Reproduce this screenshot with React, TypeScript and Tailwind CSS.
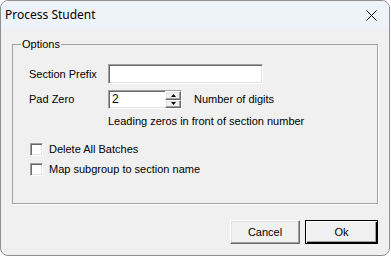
import React from "react";

// ── sunken field (classic 3D edge) ──────────────────────────────
const sunken =
  "bg-white border border-t-[#a0a0a0] border-l-[#a0a0a0] border-r-white border-b-white shadow-[inset_1px_1px_0_#696969,inset_-1px_-1px_0_#e3e3e3]";

const raised =
  "bg-[#f0f0f0] border border-t-white border-l-white border-r-[#696969] border-b-[#696969] shadow-[inset_-1px_-1px_0_#a0a0a0,inset_1px_1px_0_#e3e3e3]";

function Check({ label }: { label: string }) {
  return (
    <label className="flex items-center gap-[6px] h-[13px]">
      <span className={`w-[13px] h-[13px] ${sunken}`} />
      <span>{label}</span>
    </label>
  );
}

function Spinner() {
  return (
    <div className={`flex w-[74px] h-[19px] ${sunken}`}>
      <span className="flex-1 pl-[3px] leading-[17px] text-[12px]">2</span>
      <div className="flex flex-col w-[16px] h-full">
        <button className={`flex-1 flex items-center justify-center ${raised}`}>
          <svg width="5" height="3" viewBox="0 0 5 3"><path d="M2.5 0L5 3H0z" fill="#000" /></svg>
        </button>
        <button className={`flex-1 flex items-center justify-center ${raised}`}>
          <svg width="5" height="3" viewBox="0 0 5 3"><path d="M0 0h5L2.5 3z" fill="#000" /></svg>
        </button>
      </div>
    </div>
  );
}

export default function App() {
  return (
    <div className="w-[391px] h-[257px] bg-white">
      <div className="w-[390px] h-[256px] flex flex-col rounded-[8px] overflow-hidden border border-[#8f8f8f] bg-[#f0f0f0] text-[11px] text-black [font-family:'Liberation_Sans',Arial,sans-serif]">

        {/* title bar */}
        <div className="h-[28px] flex items-center justify-between bg-[#eef3fa] pl-[4px] pr-[12px]">
          <span className="text-[12px] [font-family:'Noto_Sans',sans-serif] text-black">Process Student</span>
          <svg width="11" height="11" viewBox="0 0 11 11">
            <path d="M0.5 0.5L10.5 10.5M10.5 0.5L0.5 10.5" stroke="#000" strokeWidth="1" />
          </svg>
        </div>

        {/* body */}
        <div className="flex-1 flex flex-col px-[11px] pt-[9px]">
          <fieldset className="h-[166px] border border-[#a0a0a0] shadow-[1px_1px_0_#fff]">
            <legend className="ml-[8px] px-[1px] leading-[13px]">Options</legend>

            <div className="flex flex-col pl-[16px] pt-[13px]">
              <div className="flex items-center">
                <span className="w-[79px]">Section Prefix</span>
                <div className={`w-[155px] h-[20px] ${sunken}`} />
              </div>

              <div className="flex items-center mt-[6px]">
                <span className="w-[79px]">Pad Zero</span>
                <Spinner />
                <span className="ml-[12px]">Number of digits</span>
              </div>

              <div className="pl-[79px] mt-[6px] leading-[13px]">
                Leading zeros in front of section number
              </div>

              <div className="flex flex-col gap-[7px] mt-[15px] pl-[1px]">
                <Check label="Delete All Batches" />
                <Check label="Map subgroup to section name" />
              </div>
            </div>
          </fieldset>

          {/* buttons */}
          <div className="flex justify-end gap-[5px] mt-[16px]">
            <button className={`w-[70px] h-[24px] ${raised}`}>Cancel</button>
            <button className="w-[73px] h-[24px] bg-[#f0f0f0] border border-black shadow-[inset_1px_1px_0_#fff,inset_-1px_-1px_0_#000,inset_-2px_-2px_0_#a0a0a0]">
              Ok
            </button>
          </div>
        </div>
      </div>
    </div>
  );
}
